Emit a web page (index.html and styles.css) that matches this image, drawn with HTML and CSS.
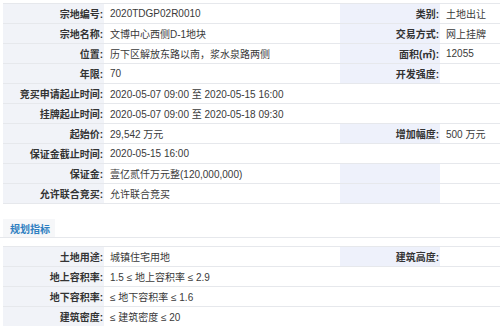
FILE: index.html
```html
<!DOCTYPE html>
<html lang="zh">
<head>
<meta charset="utf-8">
<link rel="stylesheet" href="styles.css">
</head>
<body>
<div class="page">
  <div class="grid">
    <div class="lb">宗地编号:</div><div class="vl">2020TDGP02R0010</div><div class="lb lb2">类别:</div><div class="vl">土地出让</div>
    <div class="lb">宗地名称:</div><div class="vl">文博中心西侧D-1地块</div><div class="lb lb2">交易方式:</div><div class="vl">网上挂牌</div>
    <div class="lb">位置:</div><div class="vl">历下区解放东路以南，浆水泉路两侧</div><div class="lb lb2">面积(㎡):</div><div class="vl">12055</div>
    <div class="lb">年限:</div><div class="vl">70</div><div class="lb lb2">开发强度:</div><div class="vl"></div>
    <div class="lb">竞买申请起止时间:</div><div class="vl span">2020-05-07 09:00 至 2020-05-15 16:00</div>
    <div class="lb">挂牌起止时间:</div><div class="vl span">2020-05-07 09:00 至 2020-05-18 09:30</div>
    <div class="lb">起始价:</div><div class="vl">29,542 万元</div><div class="lb lb2">增加幅度:</div><div class="vl">500 万元</div>
    <div class="lb">保证金截止时间:</div><div class="vl span">2020-05-15 16:00</div>
    <div class="lb">保证金:</div><div class="vl">壹亿贰仟万元整(120,000,000)</div><div class="lb lb2"></div><div class="vl"></div>
    <div class="lb">允许联合竞买:</div><div class="vl">允许联合竞买</div><div class="lb lb2"></div><div class="vl"></div>
  </div>
  <div class="tabs"><div class="tab">规划指标</div></div>
  <div class="grid">
    <div class="lb">土地用途:</div><div class="vl">城镇住宅用地</div><div class="lb lb2">建筑高度:</div><div class="vl"></div>
    <div class="lb">地上容积率:</div><div class="vl span">1.5 ≤ 地上容积率 ≤ 2.9</div>
    <div class="lb">地下容积率:</div><div class="vl span">≤ 地下容积率 ≤ 1.6</div>
    <div class="lb">建筑密度:</div><div class="vl span">≤ 建筑密度 ≤ 20</div>
  </div>
</div>
</body>
</html>
```
FILE: styles.css
```css
html, body {
  margin: 0;
  padding: 0;
  background: #fff;
  overflow: hidden;
}
.page {
  padding: 3px 0 0 3px;
  width: 520px;
  font-family: "Liberation Sans", "Noto Sans CJK SC", sans-serif;
  font-size: 10px;
  color: #333;
}
.grid {
  display: grid;
  grid-template-columns: 101px 236px 100px 80px;
  grid-auto-rows: 20px;
  border-top: 1px solid #e6e8ec;
}
.grid > div {
  border-bottom: 1px solid #e6e8ec;
  display: flex;
  align-items: center;
  white-space: nowrap;
  overflow: hidden;
}
.lb {
  background: #f1f3f8;
  justify-content: flex-end;
  font-weight: bold;
  color: #333;
  padding-right: 1px;
}
.lb2 {
  background: #eef1fb;
}
.vl {
  padding-left: 6px;
  color: #3a3a3a;
}
.span {
  grid-column: 2 / 5;
}
.tabs {
  margin-top: 15px;
  margin-left: -3px;
  padding-left: 3px;
  border-bottom: 1px solid #e6e8ec;
  display: flex;
  margin-bottom: 8px;
}
.tab {
  background: #f6f7f9;
  width: 52px;
  height: 18px;
  display: flex;
  align-items: center;
  padding-left: 7px;
  box-sizing: border-box;
  font-weight: bold;
  color: #2f7fc1;
}
```
